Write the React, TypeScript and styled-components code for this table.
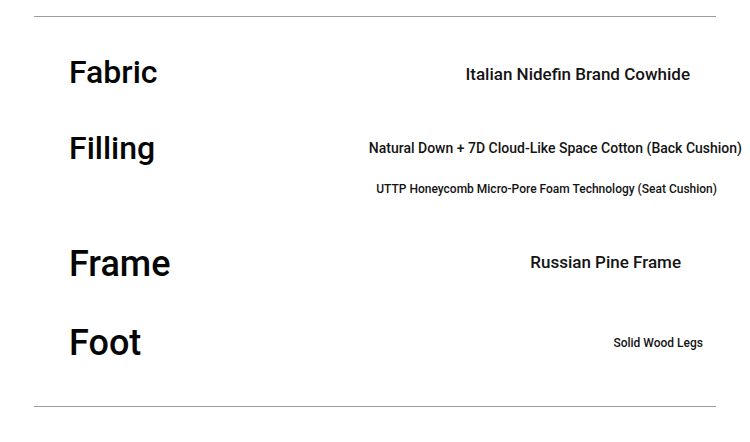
import styled, { createGlobalStyle } from "styled-components";

const Global = createGlobalStyle`
    body {
        margin: 0;
        background: #ffffff;
        font-family: Roboto, "Liberation Sans", sans-serif;
    }
`;

const Spec = styled.section`
    margin: 16px 34px 0;
    border-top: 1px solid #9c9c9c;
    border-bottom: 1px solid #9c9c9c;
    padding: 33px 0 41px;
    display: flex;
    flex-direction: column;
    gap: 31px;
`;

const Row = styled.div<{ $gap?: number }>`
    display: grid;
    grid-template-columns: 1fr auto;
    align-items: start;
    margin-top: ${(p) => p.$gap ?? 0}px;
`;

const Label = styled.h3<{ $size: number }>`
    margin: 0;
    padding-left: 35px;
    font-size: ${(p) => p.$size}px;
    font-weight: 500;
    line-height: 44px;
    color: #050505;
`;

const Values = styled.div`
    display: flex;
    flex-direction: column;
    align-items: flex-end;
`;

const Value = styled.p<{ $size: number; $shift: number; $line?: number; $drop?: number }>`
    margin: 0 ${(p) => p.$shift}px 0 0;
    padding-top: ${(p) => p.$drop ?? 0}px;
    font-size: ${(p) => p.$size}px;
    font-weight: 500;
    line-height: ${(p) => p.$line ?? 44}px;
    color: #141414;
    white-space: nowrap;
`;

export default function App() {
    return (
        <>
            <Global />
            <Spec>
                <Row>
                    <Label $size={32}>Fabric</Label>
                    <Values>
                        <Value $size={17} $shift={26} $line={40} $drop={4}>
                            Italian Nidefin Brand Cowhide
                        </Value>
                    </Values>
                </Row>
                <Row $gap={1}>
                    <Label $size={32}>Filling</Label>
                    <Values>
                        <Value $size={14} $shift={-26}>
                            Natural Down + 7D Cloud-Like Space Cotton (Back Cushion)
                        </Value>
                        <Value $size={12} $shift={-1} $line={36} $drop={1}>
                            UTTP Honeycomb Micro-Pore Foam Technology (Seat Cushion)
                        </Value>
                    </Values>
                </Row>
                <Row $gap={4}>
                    <Label $size={36}>Frame</Label>
                    <Values>
                        <Value $size={17} $shift={35} $line={40}>Russian Pine Frame</Value>
                    </Values>
                </Row>
                <Row $gap={4}>
                    <Label $size={36}>Foot</Label>
                    <Values>
                        <Value $size={12} $shift={13}>Solid Wood Legs</Value>
                    </Values>
                </Row>
            </Spec>
        </>
    );
}
